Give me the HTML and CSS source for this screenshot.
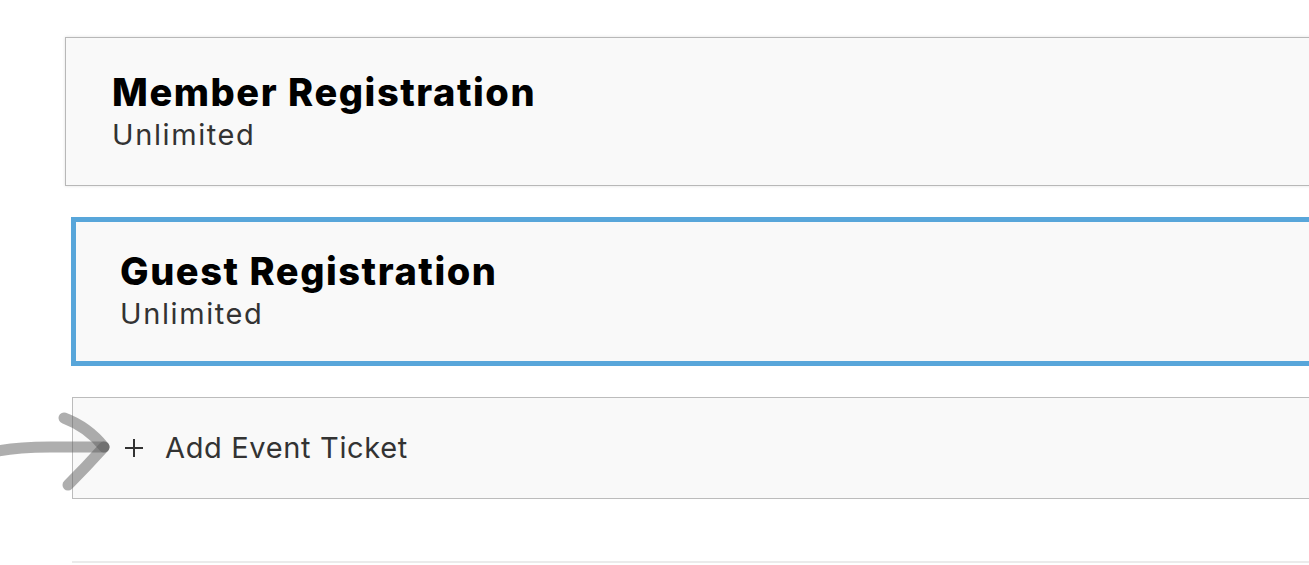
FILE: index.html
```html
<!DOCTYPE html>
<html lang="en">
<head>
<meta charset="utf-8">
<title>Event Tickets</title>
<link rel="stylesheet" href="styles.css">
</head>
<body>
<div class="list">
  <div class="card card-member">
    <div class="card-title">Member Registration</div>
    <div class="card-sub">Unlimited</div>
  </div>
  <div class="card card-guest">
    <div class="card-title">Guest Registration</div>
    <div class="card-sub">Unlimited</div>
  </div>
  <div class="card card-add">
    <svg class="plus" width="20" height="20" viewBox="0 0 20 20" aria-hidden="true">
      <path d="M10 1 V19 M1 10 H19" stroke="#333" stroke-width="2" fill="none"/>
    </svg>
    <span class="add-label">Add Event Ticket</span>
  </div>
  <div class="divider"></div>
</div>
<svg class="annotation" width="120" height="95" viewBox="0 0 120 95" aria-hidden="true">
  <g fill="none" stroke="#5e5e5e" stroke-width="11" stroke-linecap="round" stroke-linejoin="round" stroke-opacity="0.5">
    <path d="M-6 47 Q14 42 50 42 L104 42"/>
    <path d="M64 13 Q88 22 104 42"/>
    <path d="M104 42 Q86 62 68 80"/>
  </g>
</svg>
</body>
</html>
```
FILE: styles.css
```css
html, body {
  margin: 0;
  padding: 0;
  background: #ffffff;
  overflow: hidden;
}
body {
  font-family: Inter, "Liberation Sans", sans-serif;
  position: relative;
  width: 1309px;
  height: 565px;
}
.list {
  display: flex;
  flex-direction: column;
  padding-top: 37px;
}
.card {
  background: #f9f9f9;
  box-sizing: border-box;
  width: 1300px;
  margin-right: -100px;
}
.card-member {
  margin-left: 65px;
  border: 1px solid #b8b8b8;
  border-right: none;
  box-shadow: 0 0 3px rgba(0, 0, 0, 0.12);
  padding: 32px 0 32px 46px;
}
.card-guest {
  margin-left: 71px;
  margin-top: 31px;
  border: 5px solid #58a6da;
  border-right: none;
  padding: 27px 0 29px 44px;
}
.card-title {
  font-weight: 800;
  font-size: 38px;
  line-height: 44px;
  color: #000;
  letter-spacing: 1.55px;
}
.card-sub {
  margin-top: 3px;
  font-size: 29px;
  line-height: 36px;
  color: #333;
  letter-spacing: 1.6px;
}
.card-add {
  margin-left: 72px;
  margin-top: 31px;
  height: 102px;
  border: 1px solid #bcbcbc;
  border-right: none;
  display: flex;
  align-items: center;
  padding-left: 51px;
  gap: 21px;
}
.plus {
  display: block;
  flex: none;
}
.add-label {
  font-size: 29px;
  line-height: 36px;
  color: #333;
  letter-spacing: 0.65px;
}
.divider {
  margin-left: 72px;
  height: 2px;
  margin-top: 62px;
  background: #ebebeb;
}
.annotation {
  position: absolute;
  left: 0;
  top: 405px;
  overflow: visible;
}
```
